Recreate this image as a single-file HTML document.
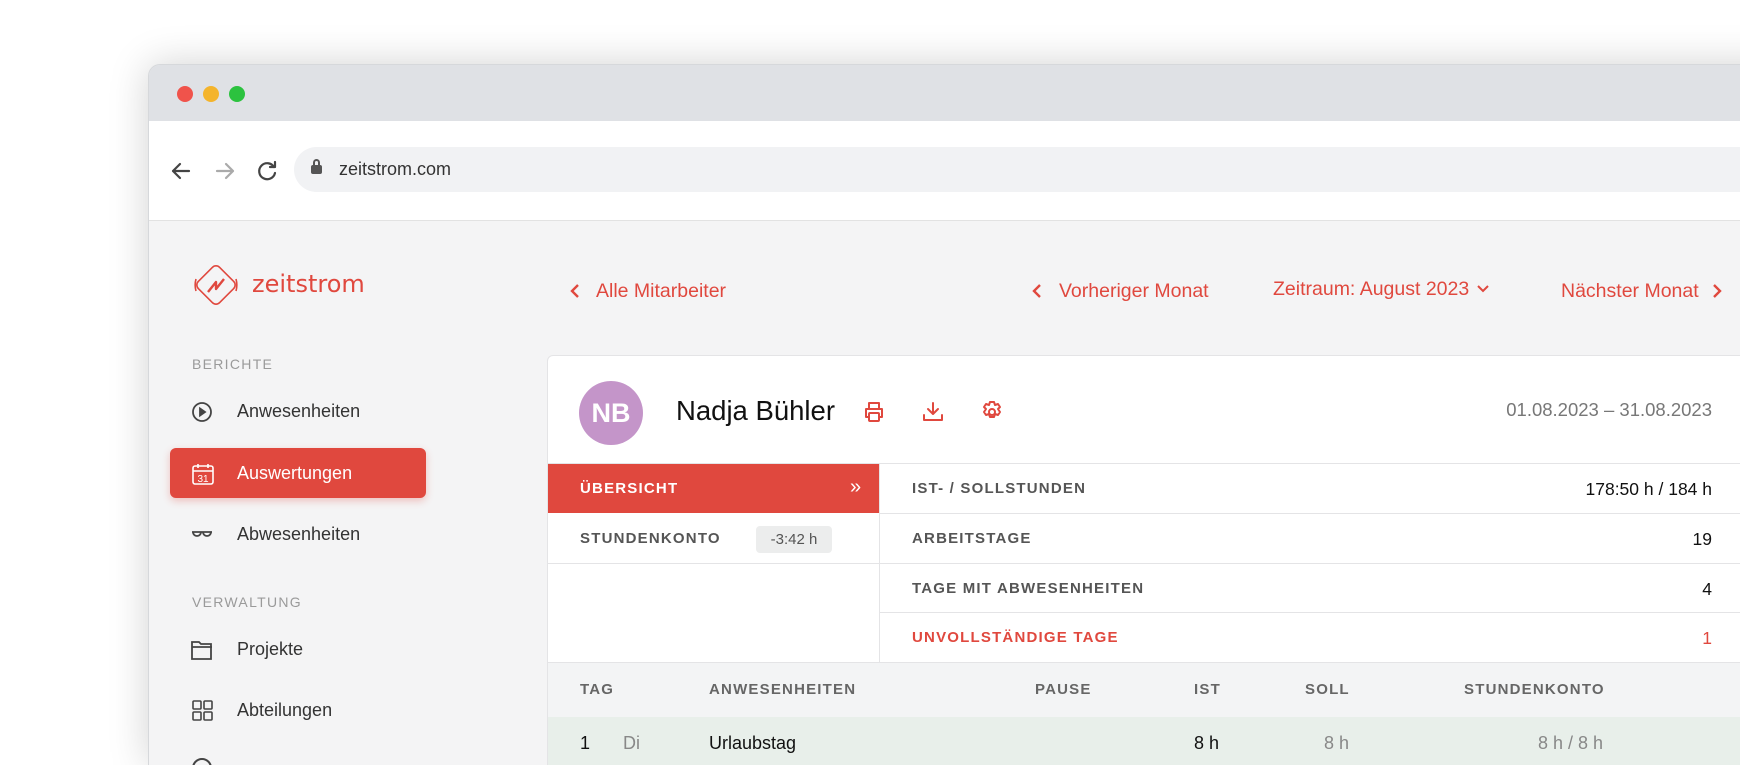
<!DOCTYPE html>
<html style="overflow:hidden;height:765px"><head><meta charset="utf-8"><style>
*{margin:0;padding:0;box-sizing:border-box}
body{width:1740px;height:765px;overflow:hidden;background:#fff;font-family:"Liberation Sans",Arial,sans-serif;position:relative}
.a{position:absolute;white-space:nowrap}
.win{position:absolute;left:148px;top:64px;width:1700px;height:701px;border-radius:12px 12px 0 0;overflow:hidden;background:#f4f4f5;box-shadow:0 0 40px rgba(0,0,0,.18);border:1px solid #d6d8db;border-bottom:none}
.red{color:#e0483e}
.nav{font-size:19.5px;color:#e0483e}
.lbl{font-size:15px;letter-spacing:1.2px;color:#555;font-weight:bold}
.hr{position:absolute;height:1px;background:#e4e4e6}
</style></head><body>
<div class="win">
 <div class="a" style="left:0;top:0;width:1700px;height:56px;background:#dfe1e5"></div>
 <div class="a" style="left:28px;top:21px;width:16px;height:16px;border-radius:50%;background:#f0534b"></div>
 <div class="a" style="left:54px;top:21px;width:16px;height:16px;border-radius:50%;background:#f4b42c"></div>
 <div class="a" style="left:80px;top:21px;width:16px;height:16px;border-radius:50%;background:#2cc23f"></div>
 <div class="a" style="left:0;top:56px;width:1700px;height:100px;background:#fff;border-bottom:1px solid #e2e2e2"></div>
 <svg class="a" style="left:20px;top:94px" width="130" height="24" viewBox="0 0 130 24" fill="none" stroke-width="2.2" stroke-linecap="round" stroke-linejoin="round">
  <path d="M20 12H4M11 5l-7 7 7 7" stroke="#444"/>
  <path d="M48 12h16M57 5l7 7-7 7" stroke="#aaa"/>
  <path d="M105 8a8 8 0 1 0 1 6" stroke="#444"/><path d="M106 3v5h-5" stroke="#444"/>
 </svg>
 <div class="a" style="left:145px;top:82px;width:1600px;height:45px;border-radius:23px;background:#f1f2f4"></div>
 <div class="a" style="left:162px;top:100px;width:11px;height:9px;background:#555;border-radius:2px"></div>
 <div class="a" style="left:164px;top:94px;width:7px;height:9px;border:2px solid #555;border-radius:4px 4px 0 0"></div>
 <div class="a" style="left:190px;top:94px;font-size:18px;color:#333">zeitstrom.com</div>
</div>
<svg class="a" style="left:190px;top:259px" width="52" height="52" viewBox="0 0 52 52" fill="none" stroke="#e0483e" stroke-width="1.6">
 <rect x="11" y="11" width="30" height="30" rx="5" transform="rotate(45 26 26)"/>
 <path d="M6 20a22 22 0 0 0 0 12M46 20a22 22 0 0 1 0 12"/>
 <path d="M18 33l8-10v7l8-10" stroke-width="2.4" stroke-linejoin="round"/>
</svg>
<div class="a" style="left:252px;top:270px;color:#e0483e;font-family:'DejaVu Sans',sans-serif;font-size:24px">zeitstrom</div>
<div class="a" style="left:192px;top:356px;font-size:14px;letter-spacing:1.3px;color:#9a9a9a">BERICHTE</div>
<svg class="a" style="left:191px;top:401px" width="22" height="22" viewBox="0 0 22 22" fill="none" stroke="#444" stroke-width="1.8"><circle cx="11" cy="11" r="9"/><path d="M9 7.5l5 3.5-5 3.5z" fill="#444"/></svg>
<div class="a" style="left:237px;top:401px;font-size:18px;color:#333">Anwesenheiten</div>
<div class="a" style="left:170px;top:448px;width:256px;height:50px;border-radius:6px;background:#e0483e;box-shadow:0 3px 8px rgba(224,72,62,.3)"></div>
<svg class="a" style="left:192px;top:463px" width="22" height="22" viewBox="0 0 22 22" fill="none" stroke="#fff" stroke-width="1.6"><rect x="1" y="3" width="20" height="18" rx="2"/><path d="M1 8h20M6 1v4M16 1v4"/><text x="11" y="19" font-size="10" fill="#fff" stroke="none" text-anchor="middle" font-family="Liberation Sans">31</text></svg>
<div class="a" style="left:237px;top:463px;font-size:18px;color:#fff">Auswertungen</div>
<svg class="a" style="left:191px;top:528px" width="22" height="14" viewBox="0 0 22 14" fill="none" stroke="#444" stroke-width="1.8"><path d="M1 4h20M2 4a4 4 0 0 0 8 0M12 4a4 4 0 0 0 8 0"/></svg>
<div class="a" style="left:237px;top:524px;font-size:18px;color:#333">Abwesenheiten</div>
<div class="a" style="left:192px;top:594px;font-size:14px;letter-spacing:1.3px;color:#9a9a9a">VERWALTUNG</div>
<svg class="a" style="left:191px;top:640px" width="22" height="20" viewBox="0 0 22 20" fill="none" stroke="#444" stroke-width="1.8"><path d="M1 4V2h7l2 2h10v15H1zM1 7h20"/></svg>
<div class="a" style="left:237px;top:639px;font-size:18px;color:#333">Projekte</div>
<svg class="a" style="left:192px;top:700px" width="22" height="22" viewBox="0 0 22 22" fill="none" stroke="#444" stroke-width="1.6"><rect x="1" y="1" width="8" height="8" rx="1"/><rect x="12" y="1" width="8" height="8" rx="1"/><rect x="1" y="12" width="8" height="8" rx="1"/><rect x="12" y="12" width="8" height="8" rx="1"/></svg>
<div class="a" style="left:237px;top:700px;font-size:18px;color:#333">Abteilungen</div>
<div class="a" style="left:192px;top:758px;width:20px;height:20px;border-radius:50%;border:2px solid #444"></div>

<svg class="a" style="left:570px;top:283px" width="10" height="16" viewBox="0 0 10 16" fill="none" stroke="#e0483e" stroke-width="2.4"><path d="M8 2L2 8l6 6"/></svg>
<div class="a nav" style="left:596px;top:280px">Alle Mitarbeiter</div>
<svg class="a" style="left:1032px;top:283px" width="10" height="16" viewBox="0 0 10 16" fill="none" stroke="#e0483e" stroke-width="2.4"><path d="M8 2L2 8l6 6"/></svg>
<div class="a nav" style="left:1059px;top:280px">Vorheriger Monat</div>
<div class="a nav" style="left:1273px;top:278px">Zeitraum: August 2023</div>
<svg class="a" style="left:1476px;top:284px" width="14" height="10" viewBox="0 0 14 10" fill="none" stroke="#e0483e" stroke-width="2"><path d="M2 2l5 5 5-5"/></svg>
<div class="a nav" style="left:1561px;top:280px">Nächster Monat</div>
<svg class="a" style="left:1712px;top:283px" width="10" height="16" viewBox="0 0 10 16" fill="none" stroke="#e0483e" stroke-width="2.4"><path d="M2 2l6 6-6 6"/></svg>

<div class="a" style="left:547px;top:355px;width:1220px;height:420px;background:#fff;border:1px solid #e4e4e6;border-radius:6px"></div>
<div class="a" style="left:579px;top:381px;width:64px;height:64px;border-radius:50%;background:#c495c9;color:#fff;font-size:27px;font-weight:bold;text-align:center;line-height:64px">NB</div>
<div class="a" style="left:676px;top:395px;font-size:27.5px;color:#111">Nadja Bühler</div>
<svg class="a" style="left:862px;top:400px" width="24" height="24" viewBox="0 0 24 24" fill="none" stroke="#e0483e" stroke-width="2" stroke-linejoin="round"><path d="M7 8V3h10v5M7 17H4V9h16v8h-3"/><rect x="7" y="13" width="10" height="8" rx="1"/></svg>
<svg class="a" style="left:921px;top:400px" width="24" height="24" viewBox="0 0 24 24" fill="none" stroke="#e0483e" stroke-width="2" stroke-linecap="round" stroke-linejoin="round"><path d="M12 3v11M7 9l5 5 5-5M3 15v5h18v-5"/></svg>
<svg class="a" style="left:980px;top:400px" width="24" height="24" viewBox="0 0 24 24" fill="none" stroke="#e0483e" stroke-width="2" stroke-linejoin="round"><path d="M10 2h4l1 3 3-1 2 3-2 2 2 3-2 3-3-1-1 3h-4l-1-3-3 1-2-3 2-3-2-2 2-3 3 1z"/><circle cx="12" cy="12" r="3"/></svg>
<div class="a" style="right:28px;top:399px;font-size:18.5px;color:#777">01.08.2023 – 31.08.2023</div>
<div class="hr" style="left:548px;top:463px;width:1200px"></div>
<div class="a" style="left:548px;top:464px;width:331px;height:49px;background:#e0483e"></div>
<div class="a lbl" style="left:580px;top:480px;color:#fff">ÜBERSICHT</div>
<div class="a" style="left:850px;top:476px;font-size:20px;color:#fff">»</div>
<div class="a lbl" style="left:580px;top:530px">STUNDENKONTO</div>
<div class="a" style="left:756px;top:526px;width:76px;height:27px;background:#eceded;border-radius:4px;font-size:15px;color:#555;text-align:center;line-height:27px">-3:42 h</div>
<div class="hr" style="left:548px;top:563px;width:331px"></div>
<div class="a" style="left:879px;top:464px;width:1px;height:198px;background:#e4e4e6"></div>
<div class="a lbl" style="left:912px;top:480px">IST- / SOLLSTUNDEN</div>
<div class="a" style="right:28px;top:479px;font-size:17.5px;color:#111">178:50 h / 184 h</div>
<div class="hr" style="left:880px;top:513px;width:900px"></div>
<div class="a lbl" style="left:912px;top:530px">ARBEITSTAGE</div>
<div class="a" style="right:28px;top:529px;font-size:17.5px;color:#111">19</div>
<div class="hr" style="left:880px;top:563px;width:900px"></div>
<div class="a lbl" style="left:912px;top:580px">TAGE MIT ABWESENHEITEN</div>
<div class="a" style="right:28px;top:579px;font-size:17.5px;color:#111">4</div>
<div class="hr" style="left:880px;top:612px;width:900px"></div>
<div class="a lbl" style="left:912px;top:629px;color:#e0483e">UNVOLLSTÄNDIGE TAGE</div>
<div class="a red" style="right:28px;top:628px;font-size:17.5px">1</div>
<div class="a" style="left:548px;top:662px;width:1200px;height:55px;background:#f3f4f5;border-top:1px solid #e4e4e6"></div>
<div class="a lbl" style="left:580px;top:681px;color:#666">TAG</div>
<div class="a lbl" style="left:709px;top:681px;color:#666">ANWESENHEITEN</div>
<div class="a lbl" style="left:1035px;top:681px;color:#666">PAUSE</div>
<div class="a lbl" style="left:1194px;top:681px;color:#666">IST</div>
<div class="a lbl" style="left:1305px;top:681px;color:#666">SOLL</div>
<div class="a lbl" style="left:1464px;top:681px;color:#666">STUNDENKONTO</div>
<div class="a" style="left:548px;top:717px;width:1200px;height:60px;background:#e8efea"></div>
<div class="a" style="left:580px;top:733px;font-size:18px;color:#111">1</div>
<div class="a" style="left:623px;top:733px;font-size:18px;color:#888">Di</div>
<div class="a" style="left:709px;top:733px;font-size:18px;color:#111">Urlaubstag</div>
<div class="a" style="left:1194px;top:733px;font-size:18px;color:#111">8 h</div>
<div class="a" style="left:1324px;top:733px;font-size:18px;color:#888">8 h</div>
<div class="a" style="left:1538px;top:733px;font-size:18px;color:#888">8 h / 8 h</div>
</body></html>
